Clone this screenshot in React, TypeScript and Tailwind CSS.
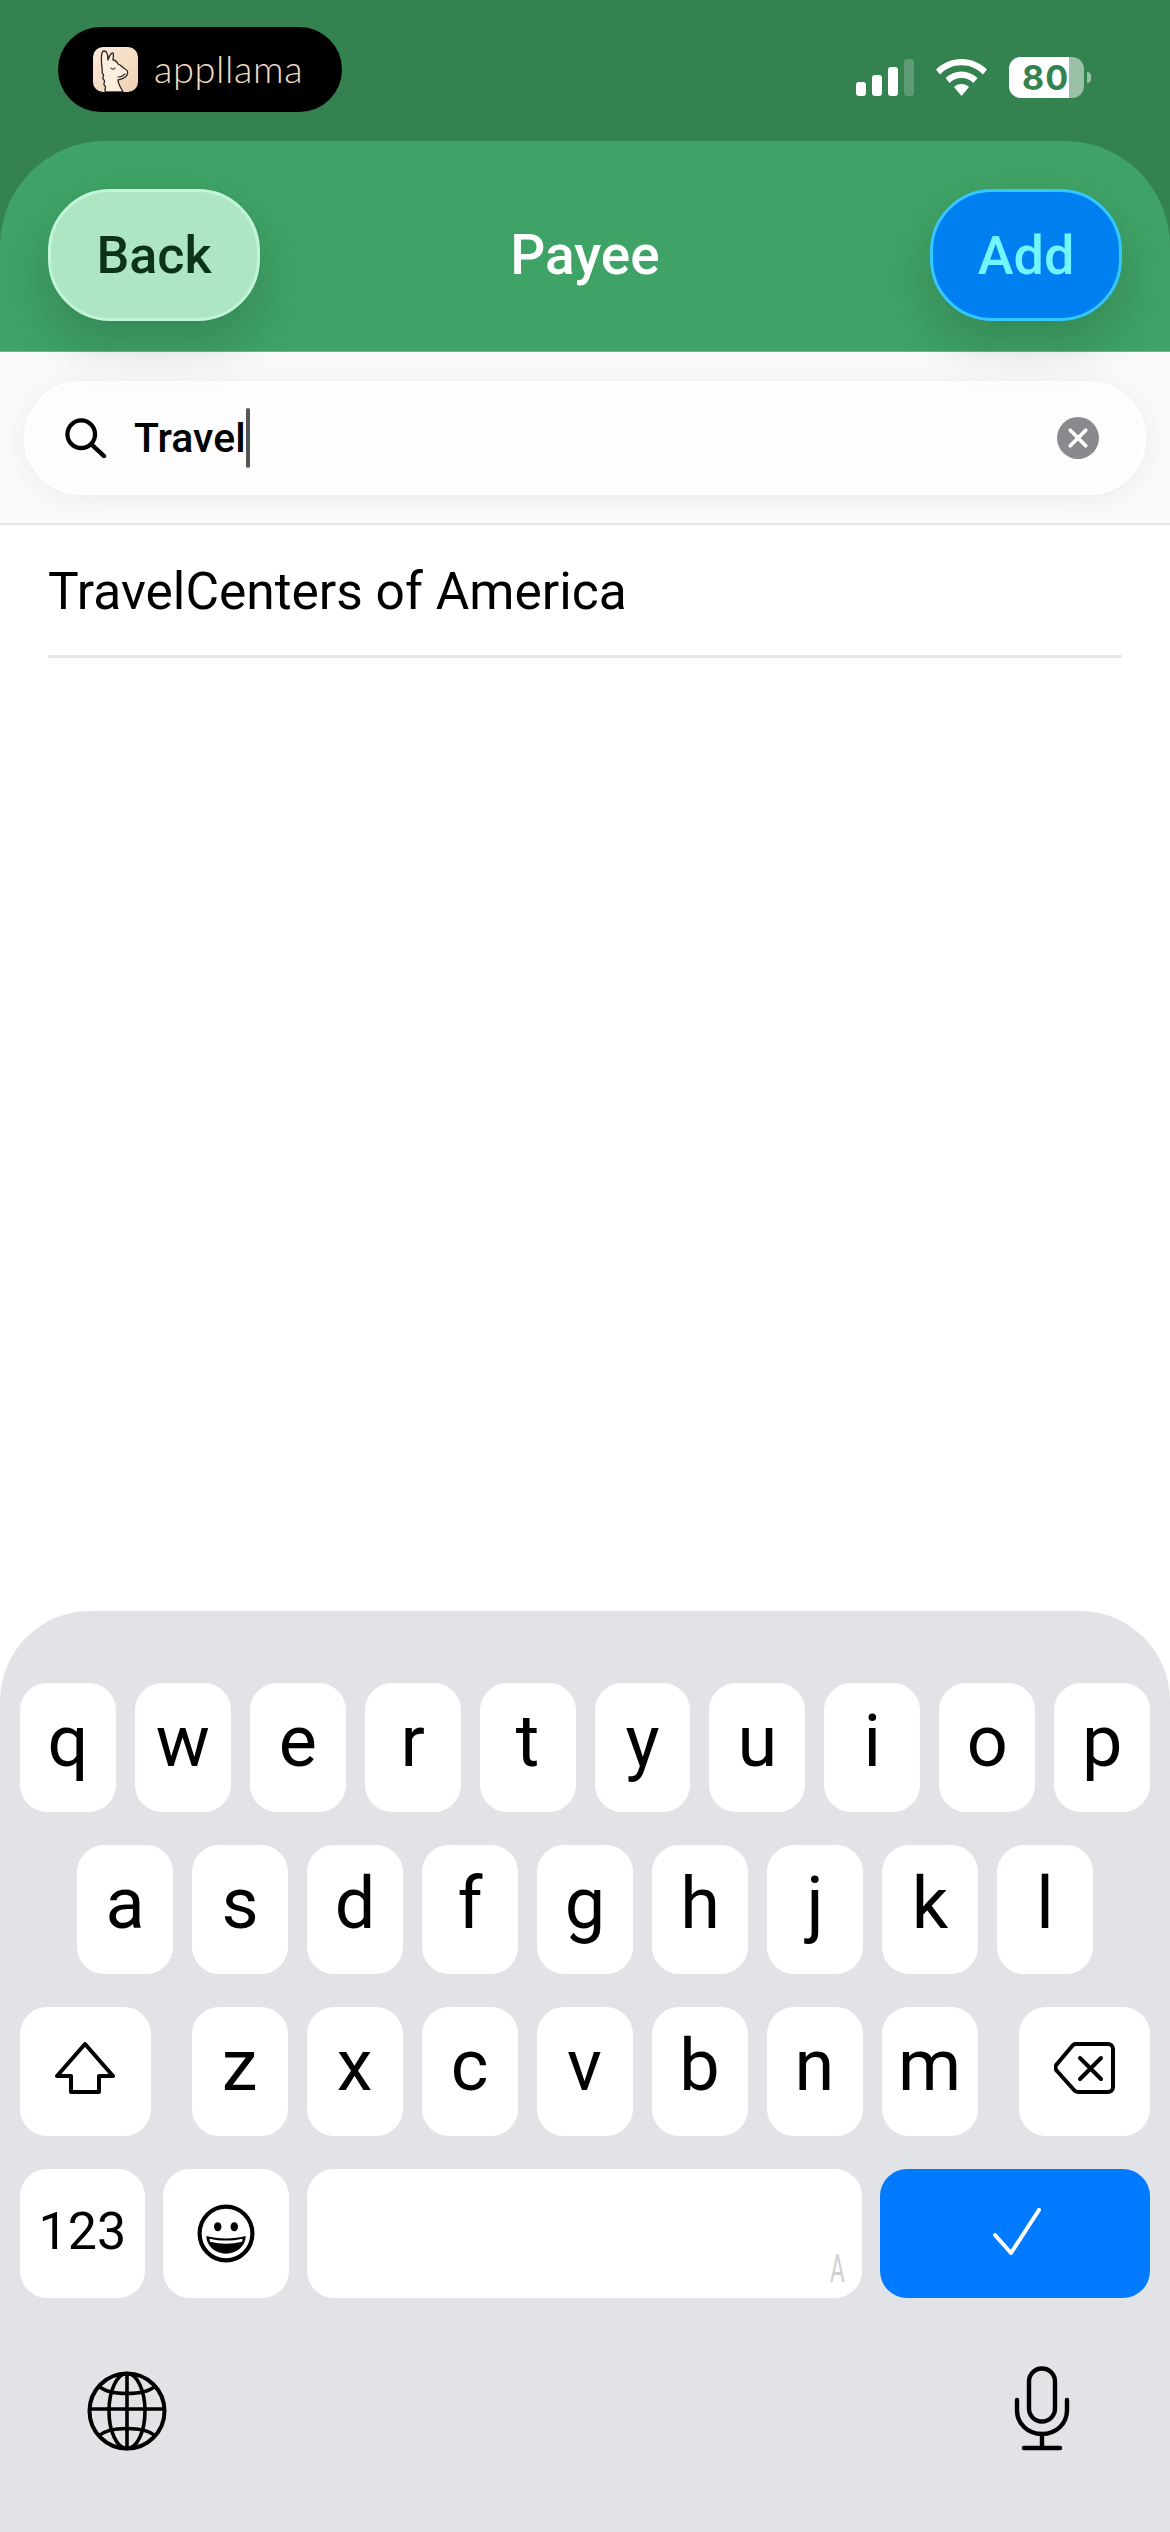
import React from "react";

const sans = "font-['Roboto','Liberation_Sans',sans-serif]";

function Llama() {
  return (
    <svg viewBox="0 0 45 45" className="w-[45px] h-[45px]">
      <defs>
        <linearGradient id="lg" x1="0" y1="0" x2="1" y2="1">
          <stop offset="0" stopColor="#fbe9d8" />
          <stop offset="1" stopColor="#f0d2b4" />
        </linearGradient>
      </defs>
      <rect width="45" height="45" rx="10" fill="url(#lg)" />
      <path
        d="M13 45 c-3-2 1-4-1-6 c-3-2 1-4-1-6 c-3-2 1-4-1-6 c-2-2 0-4-1-6 C8 12 8 4 11 4 C14 4 15 9 15 13 C16 9 19 5 20 6 C21 8 20 11 20 13 C23 13 24 15 25 17 C28 18 30 21 32 22 C35 23 35 26 34 28 C33 31 29 32 25 33 C25 37 28 41 30 45 Z"
        fill="#fdeede"
        stroke="#2a2622"
        strokeWidth="1.3"
        strokeLinejoin="round"
      />
      <path d="M18 21c1 1.5 3 1.5 4 0M25 30c2 0 5-1 7-3" fill="none" stroke="#2a2622" strokeWidth="1.1" strokeLinecap="round" />
    </svg>
  );
}

function Key({ c, w = "w-[96px]" }: { c: string; w?: string }) {
  return (
    <div className={`${w} h-full bg-white rounded-[27px] flex items-center justify-center text-[72px] font-normal text-black leading-none pb-[11px]`}>
      {c}
    </div>
  );
}

function Shift() {
  return (
    <svg viewBox="0 0 60 52" className="w-[60px] h-[52px]" fill="none" stroke="#000" strokeWidth="4" strokeLinejoin="round">
      <path d="M30 2 L58 34 H44 V50 H16 V34 H2 Z" />
    </svg>
  );
}

function Del() {
  return (
    <svg viewBox="0 0 61 52" className="w-[61px] h-[52px]" fill="none" stroke="#000" strokeWidth="4" strokeLinejoin="round" strokeLinecap="round">
      <path d="M22 2 H54 a5 5 0 0 1 5 5 V45 a5 5 0 0 1 -5 5 H24 a5 5 0 0 1 -4 -2 L3 29 a5 5 0 0 1 0 -7 L19 3 a5 5 0 0 1 3 -1 Z" />
      <path d="M26 16 L47 37 M47 16 L26 37" />
    </svg>
  );
}

function Smile() {
  return (
    <svg viewBox="0 0 56 57" className="w-[58px] h-[59px]">
      <ellipse cx="28" cy="28.5" rx="25.5" ry="26" fill="none" stroke="#000" strokeWidth="4" />
      <ellipse cx="20" cy="22" rx="3.6" ry="4.4" fill="#000" />
      <ellipse cx="36" cy="22" rx="3.6" ry="4.4" fill="#000" />
      <path d="M9 31 C20 34 36 34 47 31 C47 41 38 48 28 48 C18 48 9 41 9 31 Z" fill="#000" />
      <path d="M12 33.5 C22 36 34 36 44 33.5 L43.5 36.5 C33 39 23 39 12.5 36.5 Z" fill="#fff" />
    </svg>
  );
}

function Globe() {
  return (
    <svg viewBox="0 0 80 80" className="w-[80px] h-[80px]" fill="none" stroke="#000" strokeWidth="3.6">
      <circle cx="40" cy="40" r="37.5" strokeWidth="4" />
      <ellipse cx="40" cy="40" rx="18" ry="37.5" />
      <path d="M40 3 V77 M3 38 H77" />
      <path d="M12 15 C22 25 58 25 68 15 M12 65 C22 55 58 55 68 65" />
    </svg>
  );
}

function Mic() {
  return (
    <svg viewBox="0 0 56 85" className="w-[56px] h-[85px]" fill="none" stroke="#000" strokeWidth="4.4" strokeLinecap="round">
      <rect x="15" y="2.5" width="26" height="53" rx="13" />
      <path d="M3 34 V44 C3 58 14 68 28 68 C42 68 53 58 53 44 V34" />
      <path d="M28 68 V82 M10 82 H46" />
    </svg>
  );
}

function Wifi() {
  return (
    <svg viewBox="0 0 51 37" className="w-[51px] h-[37px]" fill="#fff">
      <path d="M25.5 0 C35 0 44 3.8 51 10.5 L47 15.5 C41.5 9.5 33.8 6.2 25.5 6.2 C17.2 6.2 9.5 9.5 4 15.5 L0 10.5 C7 3.8 16 0 25.5 0 Z" />
      <path d="M25.5 12.5 C31.5 12.5 37 14.8 41.5 19 L37.4 24 C34.2 20.7 30 19 25.5 19 C21 19 16.8 20.7 13.6 24 L9.5 19 C14 14.8 19.5 12.5 25.5 12.5 Z" />
      <path d="M25.5 25 C28.5 25 31 26 33 28 L25.5 37 L18 28 C20 26 22.5 25 25.5 25 Z" />
    </svg>
  );
}

function Bar({ h, dim }: { h: string; dim?: boolean }) {
  return <div className={`w-[10px] ${h} rounded-[3px] ${dim ? "bg-white/20" : "bg-white"}`} />;
}

export default function App() {
  return (
    <div className={`w-[1170px] h-[2532px] flex flex-col bg-white overflow-hidden ${sans}`}>
      <div className="bg-[#348250] shrink-0">
        <div className="h-[141px] flex items-start justify-between pl-[58px] pr-[79px]">
          <div className="mt-[27px] w-[284px] h-[85px] rounded-[43px] bg-black flex items-center pl-[35px] gap-[16px]">
            <Llama />
            <span className="font-['Lato',sans-serif] font-light text-[38px] tracking-[0.6px] leading-none text-[#f2dcc6] pb-[4px]">appllama</span>
          </div>
          <div className="mt-[57px] flex items-start">
            <div className="flex items-end gap-[6px] h-[39px]">
              <Bar h="h-[14px]" />
              <Bar h="h-[21px]" />
              <Bar h="h-[29px]" />
              <Bar h="h-[37px]" dim />
            </div>
            <div className="ml-[22px] mt-[2px]"><Wifi /></div>
            <div className="ml-[22px] flex items-center">
              <div className="relative w-[75px] h-[41px] rounded-[12px] overflow-hidden bg-white/50">
                <div className="w-[60px] h-full bg-white" />
                <span className="absolute left-[13px] top-0 h-full flex items-center font-['Inter',sans-serif] text-[34px] tracking-[1px] font-bold text-[#348250] leading-none">80</span>
              </div>
              <div className="ml-[3px] w-[4px] h-[11px] rounded-r-full bg-white/50" />
            </div>
          </div>
        </div>
        <div className="relative h-[211px] bg-[#3fa266] rounded-t-[105px] border-b border-b-[#9a9a9a] grid grid-cols-[212px_1fr_212px] items-center px-[48px] pt-[18px]">
          <div className="relative z-10 w-[212px] h-[132px] rounded-[62px] bg-[#aee6c4] border-[3px] border-[#c2f5d8] flex items-center justify-center pt-[2px] text-[52px] font-medium text-[#0a3318] shadow-[0_24px_50px_rgba(0,0,0,0.16)]">
            Back
          </div>
          <div className="text-center text-[55px] font-medium text-white">Payee</div>
          <div className="relative z-10 justify-self-end w-[192px] h-[132px] rounded-[62px] bg-[#0080f0] border-[3px] border-[#35c8ff] flex items-center justify-center text-[54px] font-medium text-[#72f5ff] shadow-[0_24px_50px_rgba(0,0,0,0.16)]">
            Add
          </div>
        </div>
      </div>

      <div className="h-[173px] shrink-0 bg-[#fafafa] border-b-2 border-b-[#e6e6e6] px-[24px] pt-[29px]">
        <div className="h-[114px] rounded-[57px] bg-[#fdfdfd] border-2 border-white shadow-[0_4px_30px_rgba(0,0,0,0.06)] flex items-center pl-[39px] pr-[45px]">
          <svg viewBox="0 0 44 42" className="w-[42px] h-[40px]" fill="none" stroke="#000" strokeWidth="4.5" strokeLinecap="round">
            <circle cx="17" cy="17" r="14.5" />
            <path d="M28 28 L41 40" />
          </svg>
          <span className="ml-[27px] text-[41px] font-medium text-black leading-none">Travel</span>
          <span className="w-[4px] h-[60px] rounded-full bg-[#555]" />
          <div className="ml-auto w-[42px] h-[42px] rounded-full bg-[#8a8a8e] flex items-center justify-center">
            <svg viewBox="0 0 20 20" className="w-[22px] h-[22px]" stroke="#fff" strokeWidth="3.4" strokeLinecap="round">
              <path d="M3 3 L17 17 M17 3 L3 17" />
            </svg>
          </div>
        </div>
      </div>

      <div className="flex-1 px-[48px]">
        <div className="h-[133px] pt-[4px] border-b-[3px] border-b-[#e5e5e5] flex items-center text-[51.5px] text-black leading-none">
          TravelCenters of America
        </div>
      </div>

      <div className="h-[921px] shrink-0 rounded-t-[90px] bg-[#e2e3e7] px-[20px] pt-[72px] flex flex-col">
        <div className="h-[129px] flex gap-[19px]">
          {"qwertyuiop".split("").map((c) => <Key key={c} c={c} />)}
        </div>
        <div className="h-[129px] mt-[33px] pl-[57px] flex gap-[19px]">
          {"asdfghjkl".split("").map((c) => <Key key={c} c={c} />)}
        </div>
        <div className="h-[129px] mt-[33px] flex">
          <div className="w-[131px] h-full bg-white rounded-[27px] flex items-center justify-center pb-[8px]"><Shift /></div>
          <div className="ml-[41px] flex gap-[19px] h-full">
            {"zxcvbnm".split("").map((c) => <Key key={c} c={c} />)}
          </div>
          <div className="ml-[41px] w-[132px] h-full bg-white rounded-[27px] flex items-center justify-center pb-[8px]"><Del /></div>
        </div>
        <div className="h-[129px] mt-[33px] flex gap-[18px]">
          <div className="w-[125px] h-full bg-white rounded-[27px] flex items-center justify-center pb-[4px] text-[52px] font-normal text-black">123</div>
          <div className="w-[126px] h-full bg-white rounded-[27px] flex items-center justify-center"><Smile /></div>
          <div className="relative w-[556px] h-full bg-white rounded-[27px]">
            <span className="absolute right-[12px] bottom-[10px] text-[38px] leading-none text-[#d0d0d0] scale-x-[0.6]">A</span>
          </div>
          <div className="w-[270px] h-full bg-[#007aff] rounded-[27px] flex items-center justify-center pb-[5px] pl-[3px]">
            <svg viewBox="0 0 48 47" className="w-[48px] h-[47px]" fill="none" stroke="#fff" strokeWidth="4" strokeLinecap="round" strokeLinejoin="round">
              <path d="M2 27 L18 45 L46 2" />
            </svg>
          </div>
        </div>
        <div className="mt-[68px] flex items-end justify-between pl-[67px] pr-[80px]">
          <Globe />
          <Mic />
        </div>
      </div>
    </div>
  );
}
